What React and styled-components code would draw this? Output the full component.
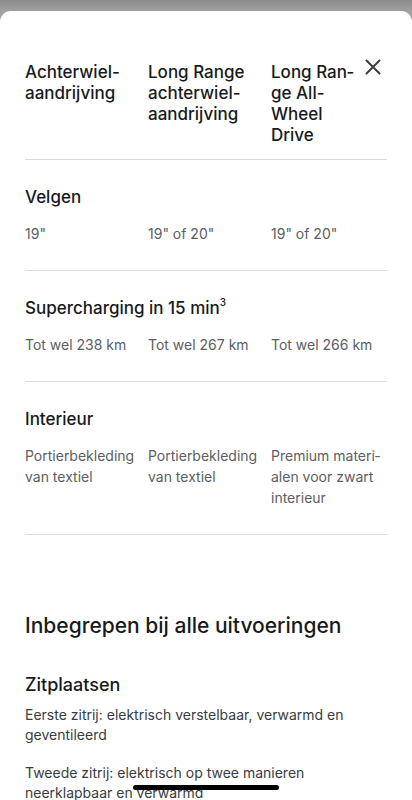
import React from "react";
import styled, { createGlobalStyle } from "styled-components";

const Global = createGlobalStyle`
  html, body { margin: 0; padding: 0; }
  body {
    background: linear-gradient(#8c8c8c, #a2a2a2 12px);
    font-family: Inter, "Noto Sans", "Liberation Sans", sans-serif;
    -webkit-font-smoothing: antialiased;
    overflow: hidden;
  }
`;

const Sheet = styled.div`
  margin-top: 11px;
  background: #ffffff;
  border-radius: 11px 11px 0 0;
  padding: 0 25px 40px;
  min-height: 789px;
  box-sizing: border-box;
`;

const HeaderRow = styled.div`
  display: grid;
  grid-template-columns: 123px 123px 88px 1fr;
  padding: 51px 0 13px;
  border-bottom: 1px solid #dcdcdd;
`;

const HeadCell = styled.div`
  font-size: 17px;
  line-height: 21px;
  font-weight: 500;
  color: #171a20;
`;

const CloseButton = styled.button`
  justify-self: center;
  width: 28px;
  height: 28px;
  margin-top: -9px;
  padding: 0;
  border: 0;
  background: transparent;
  display: flex;
  align-items: center;
  justify-content: center;
  color: #393c41;
`;

const Section = styled.div`
  padding: 25px 0 26px;
  border-bottom: 1px solid #dcdcdd;
`;

const SectionTitle = styled.div`
  font-size: 17px;
  line-height: 24px;
  font-weight: 500;
  color: #171a20;
  sup {
    font-size: 10px;
    line-height: 0;
    vertical-align: 8px;
  }
`;

const ValueRow = styled.div`
  display: grid;
  grid-template-columns: 123px 123px 1fr;
  margin-top: 14px;
`;

const Value = styled.div`
  font-size: 14px;
  line-height: 21px;
  color: #5c5e62;
`;

const Included = styled.div`
  padding-top: 77px;
`;

const IncludedTitle = styled.h2`
  margin: 0;
  font-size: 21px;
  line-height: 28px;
  font-weight: 500;
  color: #171a20;
`;

const FeatureTitle = styled.h3`
  margin: 33px 0 8px;
  font-size: 18px;
  line-height: 24px;
  font-weight: 500;
  color: #171a20;
`;

const Para = styled.p`
  margin: 0 0 18px;
  font-size: 14px;
  line-height: 20px;
  color: #393c41;
`;

const HomeIndicator = styled.div`
  position: fixed;
  left: 50%;
  bottom: 10px;
  transform: translateX(-50%);
  width: 146px;
  height: 5px;
  border-radius: 3px;
  background: #000;
`;

const SHY = "\u00AD";

const sections = [
  { title: "Velgen", values: ['19"', '19" of 20"', '19" of 20"'] },
  {
    title: "Supercharging in 15 min",
    sup: "3",
    values: ["Tot wel 238 km", "Tot wel 267 km", "Tot wel 266 km"],
  },
  {
    title: "Interieur",
    values: [
      "Portierbekleding van textiel",
      "Portierbekleding van textiel",
      `Premium materi${SHY}alen voor zwart interieur`,
    ],
  },
];

export default function App() {
  return (
    <>
      <Global />
      <Sheet>
        <HeaderRow>
          <HeadCell>Achterwiel-aandrijving</HeadCell>
          <HeadCell>Long Range achterwiel-aandrijving</HeadCell>
          <HeadCell>{`Long Ran${SHY}ge All-Wheel Drive`}</HeadCell>
          <CloseButton aria-label="Sluiten">
            <svg width="16" height="16" viewBox="0 0 16 16" fill="none">
              <path d="M1.5 1.5L14.5 14.5M14.5 1.5L1.5 14.5" stroke="currentColor" strokeWidth="2" strokeLinecap="round" />
            </svg>
          </CloseButton>
        </HeaderRow>
        {sections.map((s) => (
          <Section key={s.title}>
            <SectionTitle>
              {s.title}
              {s.sup && <sup>{s.sup}</sup>}
            </SectionTitle>
            <ValueRow>
              {s.values.map((v, i) => (
                <Value key={i}>{v}</Value>
              ))}
            </ValueRow>
          </Section>
        ))}
        <Included>
          <IncludedTitle>Inbegrepen bij alle uitvoeringen</IncludedTitle>
          <FeatureTitle>Zitplaatsen</FeatureTitle>
          <Para>Eerste zitrij: elektrisch verstelbaar, verwarmd en geventileerd</Para>
          <Para>Tweede zitrij: elektrisch op twee manieren neerklapbaar en verwarmd</Para>
        </Included>
      </Sheet>
      <HomeIndicator />
    </>
  );
}
